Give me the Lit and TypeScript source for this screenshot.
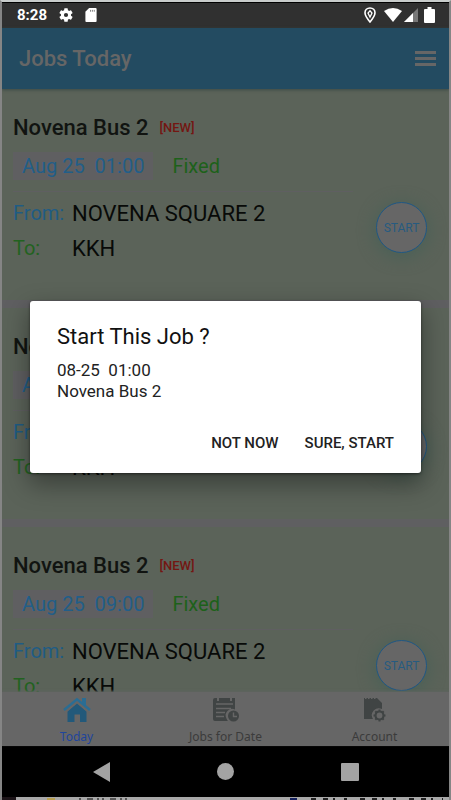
import { LitElement, html, css } from "lit";
import { customElement, property } from "lit/decorators.js";

interface Job {
  name: string;
  date: string;
  time: string;
  from: string;
  to: string;
}

const JOBS: Job[] = [
  { name: "Novena Bus 2", date: "Aug 25", time: "01:00", from: "NOVENA SQUARE 2", to: "KKH" },
  { name: "Novena Bus 2", date: "Aug 25", time: "05:00", from: "NOVENA SQUARE 2", to: "KKH" },
  { name: "Novena Bus 2", date: "Aug 25", time: "09:00", from: "NOVENA SQUARE 2", to: "KKH" },
];

const GEAR =
  "M19.14 12.94c.04-.3.06-.61.06-.94s-.02-.64-.07-.94l2.03-1.58a.49.49 0 0 0 .12-.61l-1.92-3.32a.49.49 0 0 0-.59-.22l-2.39.96c-.5-.38-1.03-.7-1.62-.94l-.36-2.54a.48.48 0 0 0-.48-.41h-3.84a.47.47 0 0 0-.47.41l-.36 2.54c-.59.24-1.13.57-1.62.94l-2.39-.96a.48.48 0 0 0-.59.22L2.74 8.87a.47.47 0 0 0 .12.61l2.03 1.58c-.05.3-.09.63-.09.94s.02.64.07.94l-2.03 1.58a.49.49 0 0 0-.12.61l1.92 3.32c.12.22.37.29.59.22l2.39-.96c.5.38 1.03.7 1.62.94l.36 2.54c.05.24.24.41.48.41h3.84c.24 0 .44-.17.47-.41l.36-2.54c.59-.24 1.13-.56 1.62-.94l2.39.96c.22.08.47 0 .59-.22l1.92-3.32a.47.47 0 0 0-.12-.61z";

@customElement("job-card")
export class JobCard extends LitElement {
  @property({ attribute: false }) job!: Job;

  static styles = css`
    :host {
      display: block;
    }
    .card {
      box-sizing: border-box;
      height: 211px;
      padding: 24px 22px 0 11px;
      background: #5b6359;
      display: flex;
      align-items: center;
      justify-content: space-between;
      overflow: hidden;
    }
    .info {
      align-self: flex-start;
      width: 340px;
    }
    .title {
      display: flex;
      align-items: center;
      gap: 11px;
      margin: 0;
      height: 28px;
      font-size: 22px;
      font-weight: 500;
      color: #111411;
    }
    .tag {
      font-size: 13px;
      font-weight: 500;
      color: #741612;
    }
    .when {
      display: flex;
      align-items: center;
      height: 26px;
      gap: 19px;
      margin: 12px 0;
      font-size: 20px;
      line-height: 28px;
    }
    .slot {
      padding: 0 9px;
      color: #225e88;
      background: #5f5f61;
      white-space: pre;
    }
    .kind {
      color: #1d611a;
    }
    .route {
      margin: 0;
      padding-top: 4px;
      border-top: 1px solid #5f5f61;
      display: grid;
      grid-template-columns: 59px 1fr;
      grid-auto-rows: 35px;
      line-height: 35px;
    }
    dt {
      font-size: 20px;
      color: #1f5c84;
    }
    .to {
      color: #226220;
    }
    dd {
      margin: 0;
      font-size: 22px;
      color: #080a08;
      white-space: nowrap;
    }
    .start {
      width: 51px;
      height: 51px;
      flex: none;
      margin-top: 42px;
      padding: 0;
      border: 1px solid #1f5785;
      border-radius: 50%;
      background: #666;
      color: #265b80;
      font: 12px Roboto, sans-serif;
      box-shadow: 0 3px 16px 2px #4b6157;
    }
  `;

  render() {
    const j = this.job;
    return html`<article class="card">
      <div class="info">
        <h2 class="title">${j.name}<span class="tag">[NEW]</span></h2>
        <div class="when">
          <span class="slot">${j.date}  ${j.time}</span><span class="kind">Fixed</span>
        </div>
        <dl class="route">
          <dt>From:</dt>
          <dd>${j.from}</dd>
          <dt class="to">To:</dt>
          <dd>${j.to}</dd>
        </dl>
      </div>
      <button class="start">START</button>
    </article>`;
  }
}

@customElement("app-root")
export class AppRoot extends LitElement {
  static styles = css`
    :host {
      display: block;
      height: 100vh;
      font-family: Roboto, "Noto Sans", sans-serif;
    }
    .window {
      position: relative;
      box-sizing: border-box;
      height: 100%;
      border: solid #858585;
      border-width: 2px 2px 0;
      border-top-color: #c8cccb;
      display: flex;
      flex-direction: column;
      overflow: hidden;
    }
    .status {
      flex: none;
      box-sizing: border-box;
      height: 26px;
      padding: 0 14px 2px 15px;
      border-top: 1px solid #000;
      background: #303030;
      color: #fff;
      display: flex;
      align-items: center;
      justify-content: space-between;
      font-size: 15px;
      font-weight: 700;
    }
    .group {
      display: flex;
      align-items: center;
      gap: 12px;
    }
    .signals {
      gap: 2px;
    }
    .place {
      margin-right: 5px;
    }
    .battery {
      margin-left: 4px;
    }
    svg {
      display: block;
    }
    .bar {
      flex: none;
      box-sizing: border-box;
      height: 61px;
      padding: 0 13px 0 17px;
      background: #234b61;
      box-shadow: 0 1px 3px #3c4a45;
      position: relative;
      display: flex;
      align-items: center;
      justify-content: space-between;
    }
    .bar h1 {
      margin: 0;
      font-size: 22px;
      font-weight: 500;
      color: #666;
    }
    .menu {
      padding: 0;
      border: 0;
      background: none;
    }
    .jobs {
      flex: 1;
      min-height: 0;
      overflow: hidden;
      display: flex;
      flex-direction: column;
      gap: 8px;
      background: #5f5f61;
    }
    job-card {
      flex: none;
    }
    .tabs {
      flex: none;
      position: relative;
      height: 54px;
      background: #666;
      box-shadow: 0 -1px 2px #5f6460;
      display: grid;
      grid-template-columns: repeat(3, 1fr);
    }
    .tab {
      display: flex;
      flex-direction: column;
      align-items: center;
      gap: 5px;
      padding-top: 5px;
      text-decoration: none;
      font: 12px/18px "Noto Sans", sans-serif;
      color: #3b3b3b;
    }
    .active {
      color: #1f459c;
    }
    .system {
      flex: none;
      height: 51px;
      background: #000;
      display: flex;
      justify-content: center;
      align-items: center;
      gap: 100px;
    }
    .system button {
      width: 24px;
      padding: 0;
      border: 0;
      background: none;
      display: flex;
      justify-content: center;
    }
    .edge {
      flex: none;
      height: 3px;
      background: #a8a8a8;
    }
    .scrim {
      position: absolute;
      inset: 0;
      padding: 299px 28px 0;
    }
    .dialog {
      padding: 22px 27px 16px;
      border-radius: 3px;
      background: #fff;
      box-shadow: 0 10px 24px 2px rgba(0, 0, 0, 0.35), 0 1px 3px rgba(0, 0, 0, 0.5);
    }
    .dialog h2 {
      margin: 0 0 9px;
      font-size: 22px;
      line-height: 28px;
      font-weight: 400;
      color: #111;
    }
    .dialog p {
      margin: 0;
      font-size: 17px;
      line-height: 21px;
      color: #222;
      white-space: pre;
    }
    .actions {
      margin-top: 27px;
      display: flex;
      justify-content: flex-end;
      gap: 26px;
    }
    .actions button {
      padding: 0;
      border: 0;
      background: none;
      color: #222;
      font: 500 15px/28px Roboto, sans-serif;
    }
  `;

  render() {
    return html`<div class="window">
      <div class="status">
        <div class="group">
          <span>8:28</span>
          <svg width="14" height="14" viewBox="2 2 20 20">
            <path fill="#fff" fill-rule="evenodd" d="${GEAR}M12 15a3 3 0 1 1 0-6 3 3 0 0 1 0 6z" />
          </svg>
          <svg width="12" height="14" viewBox="0 0 12 15">
            <path fill="#fff" d="M4 0h7q1 0 1 1v13q0 1-1 1H1q-1 0-1-1V4z" />
            <path stroke="#777" d="M5.5 2v2M7.5 2v2M9.5 2v2" />
          </svg>
        </div>
        <div class="group signals">
          <svg class="place" width="14" height="16" viewBox="0 0 14 16">
            <path fill="none" stroke="#fff" stroke-width="1.6" d="M7 1C4 1 2 3.2 2 5.8 2 9 7 15 7 15s5-6 5-9.2C12 3.2 10 1 7 1z" />
            <path fill="none" stroke="#fff" stroke-width="1.3" d="M7 3.8L9 6l-2 4-2-4z" />
          </svg>
          <svg width="18" height="14" viewBox="0 0 18 14">
            <path fill="#fff" d="M0 3Q9-3 18 3L9 14z" />
          </svg>
          <svg width="14" height="14" viewBox="0 0 14 14">
            <path fill="#777" d="M14 0v14H0z" />
            <path fill="#fff" d="M9 5v9H0z" />
          </svg>
          <svg class="battery" width="11" height="16" viewBox="0 0 11 16">
            <path fill="#fff" d="M3.5 0h4v2H10q1 0 1 1v12q0 1-1 1H1q-1 0-1-1V3q0-1 1-1h2.5z" />
          </svg>
        </div>
      </div>

      <header class="bar">
        <h1>Jobs Today</h1>
        <button class="menu" aria-label="Menu">
          <svg width="21" height="15" viewBox="0 0 21 15">
            <path stroke="#666" stroke-width="3" d="M0 1.5h21M0 7.5h21M0 13.5h21" />
          </svg>
        </button>
      </header>

      <main class="jobs">${JOBS.map((j) => html`<job-card .job=${j}></job-card>`)}</main>

      <nav class="tabs">
        <a class="tab active" href="#today">
          <svg width="28" height="26" viewBox="0 0 28 26">
            <path fill="#22597a" d="M4.5 14.5L14 6.5l9.5 8V25H17v-7.5h-5.5V25h-7z" />
            <path fill="none" stroke="#666" stroke-width="1.2" d="M2 15.5L14 5.3l12 10.2" />
            <path fill="none" stroke="#2a6d94" stroke-width="2.4" d="M1 13L14 2.3 27 13" />
            <path fill="#2a6d94" d="M19 1h4v8l-4-3.5z" />
          </svg>
          Today
        </a>
        <a class="tab" href="#dates">
          <svg width="28" height="26" viewBox="0 0 28 26">
            <path
              fill="#404444"
              d="M3 1h2v3h2V1h11v3h2V1h3v11.5a6.5 6.5 0 0 0-8.5 9q.5 1.500 1.500 2.500H3q-2 0-2-2V3q0-2 2-2z"
            />
            <path stroke="#666" stroke-width="1.5" d="M4 7h17M4 11.5h15M4 15.5h9M4 19.5h8" />
            <circle cx="21.5" cy="19" r="5.5" fill="#404444" />
            <path fill="none" stroke="#666" stroke-width="1.4" d="M21.5 15.5v4H25" />
          </svg>
          Jobs for Date
        </a>
        <a class="tab" href="#account">
          <svg width="24" height="26" viewBox="0 0 24 26">
            <path fill="#404444" d="M1 1h13l5 5v6a7 7 0 0 0-9 10H1z" />
            <path stroke="#666" stroke-dasharray="1.5 1.5" d="M2 1.5h12" />
            <circle cx="16.5" cy="18.5" r="4" fill="none" stroke="#404444" stroke-width="2.2" />
            <path
              stroke="#404444"
              stroke-width="2"
              d="M16.5 12.5v2M16.5 22.5v2M10.5 18.5h2M20.5 18.5h2M12.3 14.3l1.4 1.4M19.3 21.3l1.4 1.4M12.3 22.7l1.4-1.4M19.3 15.7l1.4-1.4"
            />
          </svg>
          Account
        </a>
      </nav>

      <div class="system">
        <button aria-label="Back">
          <svg width="17" height="20" viewBox="0 0 17 20"><path fill="#a3a3a3" d="M17 0v20L0 10z" /></svg>
        </button>
        <button aria-label="Home">
          <svg width="17" height="17" viewBox="0 0 17 17"><circle cx="8.5" cy="8.5" r="8.5" fill="#a3a3a3" /></svg>
        </button>
        <button aria-label="Recent apps">
          <svg width="18" height="18" viewBox="0 0 18 18"><rect width="18" height="18" rx="1" fill="#a3a3a3" /></svg>
        </button>
      </div>
      <div class="edge">
        <svg width="447" height="3" viewBox="0 0 447 3">
          <path fill="#1c1418" d="M0 0h14v3H0z" />
          <path fill="#b89f50" d="M45 1h8v2h-8z" />
          <path stroke="#555" stroke-width="2" stroke-dasharray="2 6 6 4 2 3" d="M77 2h51" />
          <path fill="#14205c" d="M288 1h7v2h-7z" />
          <path stroke="#222" stroke-width="2" stroke-dasharray="5 7 5 5 2 9 3 13" d="M309 2h132" />
        </svg>
      </div>

      <div class="scrim">
        <section class="dialog" role="dialog" aria-labelledby="ask">
          <h2 id="ask">Start This Job ?</h2>
          <p>08-25  01:00</p>
          <p>Novena Bus 2</p>
          <div class="actions">
            <button>NOT NOW</button>
            <button>SURE, START</button>
          </div>
        </section>
      </div>
    </div>`;
  }
}
